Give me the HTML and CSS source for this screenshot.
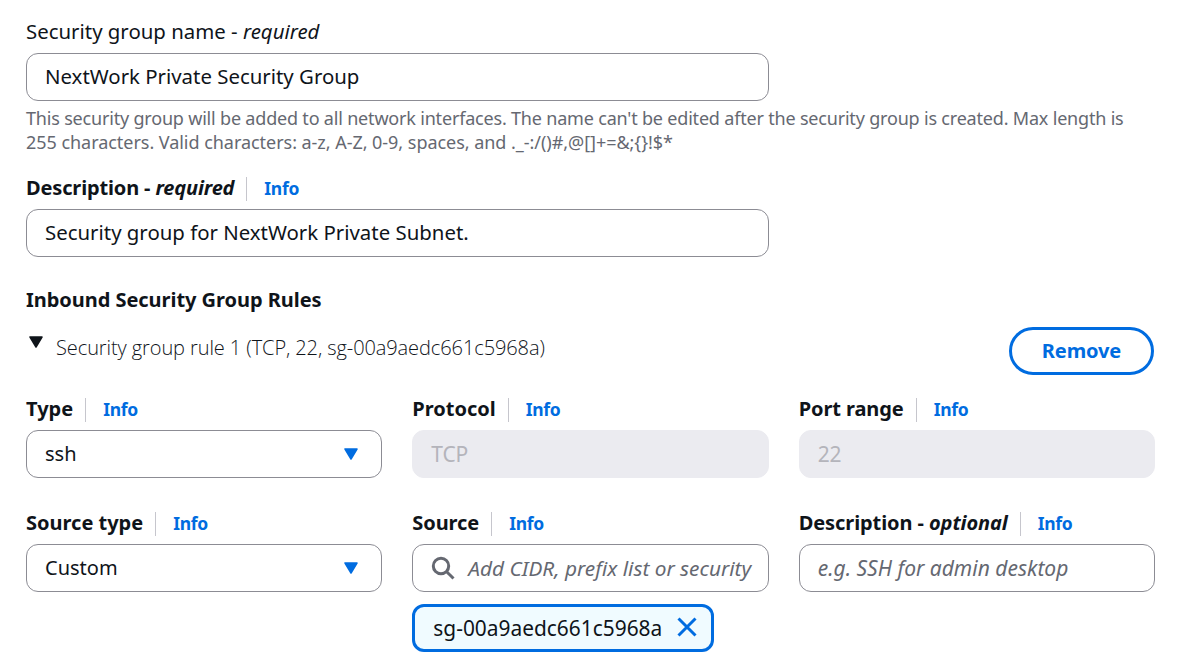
FILE: index.html
```html
<!DOCTYPE html>
<html lang="en">
<head>
<meta charset="utf-8">
<title>Security group</title>
<link rel="stylesheet" href="styles.css">
</head>
<body>
<main class="form">
  <section class="field field-name">
    <div class="label label-plain"><span>Security group name - <em>required</em></span></div>
    <div class="input input-wide"><span class="value">NextWork Private Security Group</span></div>
    <p class="hint"><span class="hint-first">This security group will be added to all network interfaces. The name can't be edited after the security group is created. Max length is</span><br><span class="hint-second">255 characters. Valid characters: a-z, A-Z, 0-9, spaces, and ._-:/()#,@[]+=&amp;;{}!$*</span></p>
  </section>

  <section class="field field-description">
    <div class="label"><span class="with-note">Description - <em>required</em></span><a class="info">Info</a></div>
    <div class="input input-wide"><span class="value">Security group for NextWork Private Subnet.</span></div>
  </section>

  <h2 class="heading">Inbound Security Group Rules</h2>

  <div class="rule-header">
    <div class="rule-title">
      <svg class="caret caret-dark" viewBox="0 0 16 13"><path d="M2 1h12l-6 10z"/></svg>
      <span>Security group rule 1 (TCP, 22, sg-00a9aedc661c5968a)</span>
    </div>
    <button class="remove" type="button">Remove</button>
  </div>

  <div class="grid">
    <div class="field">
      <div class="label"><span>Type</span><a class="info">Info</a></div>
      <div class="input select"><span>ssh</span><svg class="caret" viewBox="0 0 16 13"><path d="M2 1h12l-6 10z"/></svg></div>
    </div>
    <div class="field">
      <div class="label"><span>Protocol</span><a class="info">Info</a></div>
      <div class="input disabled"><span>TCP</span></div>
    </div>
    <div class="field">
      <div class="label"><span class="port">Port range</span><a class="info">Info</a></div>
      <div class="input disabled"><span>22</span></div>
    </div>
    <div class="field">
      <div class="label"><span>Source type</span><a class="info">Info</a></div>
      <div class="input select"><span>Custom</span><svg class="caret" viewBox="0 0 16 13"><path d="M2 1h12l-6 10z"/></svg></div>
    </div>
    <div class="field">
      <div class="label"><span class="source">Source</span><a class="info">Info</a></div>
      <div class="input search"><svg class="magnifier" viewBox="0 0 24 24"><circle cx="10" cy="10" r="7.7"/><path d="M15.2 15.2l7.3 7.3"/></svg><span class="placeholder">Add CIDR, prefix list or security</span></div>
      <div class="token"><span>sg-00a9aedc661c5968a</span><svg class="close" viewBox="0 0 20 20"><path d="M1.5 1.5l17 17M18.5 1.5l-17 17"/></svg></div>
    </div>
    <div class="field">
      <div class="label"><span class="with-note with-optional">Description - <em>optional</em></span><a class="info">Info</a></div>
      <div class="input"><span class="placeholder">e.g. SSH for admin desktop</span></div>
    </div>
  </div>
</main>
</body>
</html>
```
FILE: styles.css
```css
* { box-sizing: border-box; }

body {
  margin: 0;
  background: #fff;
  color: #0f141a;
  font-family: "Noto Sans", "Open Sans", sans-serif;
  font-size: 20px;
  line-height: 30px;
}

.form { width: 1155px; padding: 17px 0 0 26px; }

.label {
  display: flex;
  align-items: center;
  height: 30px;
  margin-bottom: 6px;
  font-weight: 700;
  white-space: nowrap;
}
.label-plain { padding-bottom: 2px; font-size: 20.4px; font-weight: 400; }
.with-note { letter-spacing: -0.15px; }
.with-optional { letter-spacing: -0.08px; }
.port, .source { letter-spacing: -0.08px; }

.info {
  height: 24px;
  margin: 2px 0 0 12px;
  padding-left: 17px;
  border-left: 1px solid #c6c6cd;
  color: #006ce0;
  font-size: 17.5px;
  line-height: 23px;
  font-weight: 700;
  letter-spacing: -0.3px;
}

.input {
  display: flex;
  align-items: center;
  height: 48px;
  padding: 0 18px;
  border: 1px solid #8c8c94;
  border-radius: 12px;
  white-space: nowrap;
}
.input-wide { width: 743px; }
.value { padding-bottom: 2px; font-size: 20.4px; }
.disabled { border-color: #ebebf0; background: #ebebf0; color: #b4b4bb; font-size: 21px; letter-spacing: -0.2px; }
.select { justify-content: space-between; padding-right: 22px; }

.hint {
  margin: 5px 0 0;
  color: #656871;
  font-size: 18px;
  line-height: 24px;
  white-space: nowrap;
}
.hint-first { letter-spacing: -0.188px; }
.hint-second { letter-spacing: -0.04px; }

.field-description { margin-top: 19px; }

.heading { margin: 28px 0 12px; font-size: 20px; line-height: 30px; letter-spacing: -0.04px; }

.rule-header { display: flex; justify-content: space-between; height: 48px; padding-right: 1px; }
.rule-title {
  display: flex;
  gap: 12px;
  padding: 6px 0 0 2px;
  font-family: "Open Sans", "Noto Sans", sans-serif;
  font-weight: 300;
  letter-spacing: -0.09px;
}
.caret { width: 16px; height: 13px; fill: #006ce0; stroke: #006ce0; stroke-width: 1.5; stroke-linejoin: round; }
.caret-dark { margin-top: 3px; fill: #0f141a; stroke: #0f141a; }

.remove {
  width: 145px;
  height: 48px;
  padding: 0;
  border: 3px solid #006ce0;
  border-radius: 24px;
  background: #fff;
  color: #006ce0;
  font: inherit;
  font-weight: 700;
  letter-spacing: -0.1px;
}

.grid { display: grid; grid-template-columns: repeat(3, 1fr); gap: 30px; margin-top: 19px; }
.grid .field { min-width: 0; }

.placeholder { color: #656871; font-size: 21px; font-style: italic; }
.search .placeholder { font-size: 20.8px; }
.magnifier { flex: none; width: 24px; height: 24px; margin: 0 13px 0 0; fill: none; stroke: #656871; stroke-width: 3; }

.token {
  display: flex;
  align-items: center;
  justify-content: space-between;
  width: 302px;
  height: 48px;
  margin-top: 12px;
  padding: 0 14px 0 18px;
  border: 3px solid #006ce0;
  border-radius: 12px;
  background: #f0fbff;
  font-size: 20.9px;
}
.close { width: 20px; height: 20px; margin-bottom: 2px; fill: none; stroke: #006ce0; stroke-width: 3; }
```
